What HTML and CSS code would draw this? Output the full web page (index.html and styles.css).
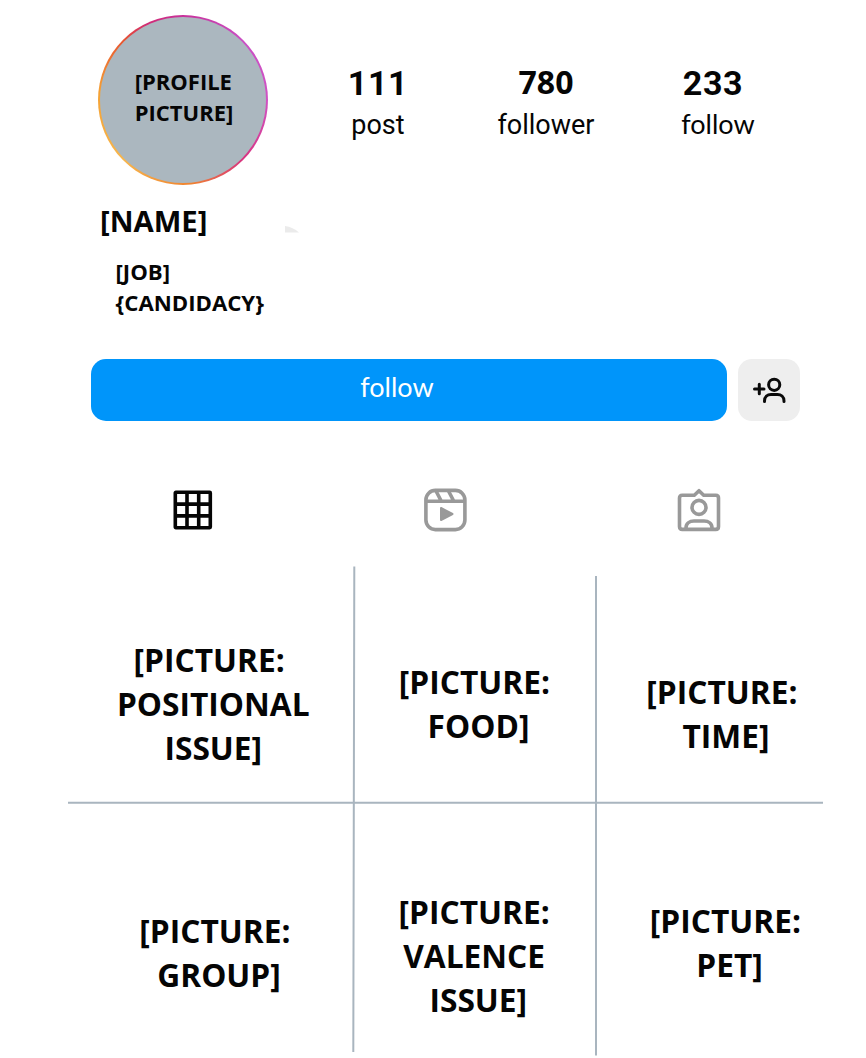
FILE: index.html
```html
<!DOCTYPE html>
<html lang="en">
<head>
<meta charset="utf-8">
<title>Profile</title>
<link rel="stylesheet" href="styles.css">
</head>
<body>
<main class="profile">
  <header class="header">
    <div class="avatar"><div class="avatar-fill">[PROFILE<br>PICTURE]</div></div>
    <div class="stats">
      <div class="stat stat-post"><span class="count">111</span><span class="label">post</span></div>
      <div class="stat stat-follower"><span class="count">780</span><span class="label">follower</span></div>
      <div class="stat stat-follow"><span class="count">233</span><span class="label">follow</span></div>
    </div>
  </header>
  <section class="bio">
    <div class="name-row">
      <h1 class="name">[NAME]</h1>
      <svg class="fleck" width="14" height="7" viewBox="0 0 14 7"><path d="M0 0Q8 1 14 6.500H0z" fill="#ebebeb"/></svg>
    </div>
    <p class="about">[JOB]<br>{CANDIDACY}</p>
  </section>
  <div class="actions">
    <button class="follow">follow</button>
    <button class="suggest" aria-label="Suggestions">
      <svg width="61" height="62" viewBox="0 0 61 62" fill="none" stroke="#0a0a0a" stroke-width="3" stroke-linecap="round">
        <path d="M16.500 30H26M21.300 25.200V34.800"/><circle cx="36.200" cy="25.800" r="5.600"/><path d="M26.500 42.500V42C26.500 37.500 29.500 35.400 33 35.400H39.500C43 35.400 46 37.500 46 42V42.500"/>
      </svg>
    </button>
  </div>
  <nav class="tabs">
    <svg width="40" height="40" viewBox="0 0 40 40" fill="none" stroke="#050505" stroke-width="3.600">
      <rect x="2.300" y="2.300" width="35" height="35.400" rx=".6"/><path d="M14 2V38M25.700 2V38M2 14.100H37M2 25.900H37"/>
    </svg>
    <svg width="44" height="44" viewBox="0 0 44 44" fill="none" stroke="#999" stroke-width="3.600" stroke-linejoin="round">
      <rect x="2.900" y="2.400" width="39" height="39.200" rx="9.500"/><path d="M3 13.200H42M13 3L18.200 13M25.500 3L30.700 13"/><path d="M18 20V32L29.500 26z" fill="#999" stroke-width="2"/>
    </svg>
    <svg width="44" height="44" viewBox="0 0 44 44" fill="none" stroke="#999" stroke-width="3.600" stroke-linejoin="round">
      <path d="M5.200 7.200H17.300L22 2.700L26.700 7.200H38.800Q41.500 7.200 41.500 10V38.500Q41.500 41.400 38.800 41.400H5.200Q2.500 41.400 2.500 38.500V10Q2.500 7.200 5.200 7.200z"/><circle cx="22" cy="19.400" r="7"/><path d="M9 41V40C9 35.500 12.500 33 17 33H27C31.500 33 35 35.500 35 40V41"/>
    </svg>
  </nav>
  <section class="gallery">
    <div class="tile tile-positional">[PICTURE: 
POSITIONAL
ISSUE]</div>
    <div class="tile tile-food">[PICTURE: 
FOOD]</div>
    <div class="tile tile-time">[PICTURE: 
TIME]</div>
    <div class="tile tile-group">[PICTURE: 
GROUP]</div>
    <div class="tile tile-valence">[PICTURE: 
VALENCE 
ISSUE]</div>
    <div class="tile tile-pet">[PICTURE: 
PET]</div>
    <svg class="dividers" width="756" height="492" viewBox="0 0 756 492" fill="none" stroke="#a9b5bf" stroke-width="2">
      <path d="M286.300 .5L285.300 486M528 10V489.500M0 236.700H755"/>
    </svg>
  </section>
</main>
</body>
</html>
```
FILE: styles.css
```css
* { box-sizing: border-box; }
body { margin: 0; background: #fff; color: #050505; font-family: "Open Sans", sans-serif; }
.profile { width: 866px; height: 1058px; overflow: hidden; padding: 15px 42px 0 68px; }
.header { display: flex; height: 170px; padding-left: 30.4px; }
.avatar {
  width: 170px; height: 170px; padding: 2px; border-radius: 50%;
  background: conic-gradient(#c8329b, #c94fc4 45deg, #d052c4 90deg, #d8337f 135deg, #f0832f 175deg, #f6b64e 225deg, #f5a235 275deg, #e8542f 315deg, #d12b75 335deg, #c8329b);
}
.avatar-fill {
  height: 100%; border-radius: 50%; background: #abb7bf; padding: 49px 0 0 34.3px;
  font-size: 22px; line-height: 30.5px; font-weight: 700;
}
.stats { display: grid; grid-template-columns: 168px 168px 176px; margin-left: 25.6px; }
.stat { display: flex; flex-direction: column; align-items: center; padding-top: 48px; }
.count { font: 700 34px/40px Roboto, sans-serif; letter-spacing: .6px; }
.label { font: 400 27px/32px Roboto, sans-serif; margin-top: 6px; }
.stat-follower .count { font: 700 32px/38px "Open Sans", sans-serif; letter-spacing: 0; margin-bottom: 2px; }
.stat-follow .count { margin-right: 10px; }
.stat-follow .label { font: 400 27px/32px Lato, sans-serif; margin-top: 5px; }
.bio { height: 174px; padding: 15px 0 0 32px; }
.name-row { display: flex; }
.name { margin: 0; width: 185px; font-size: 29.3px; line-height: 42px; font-weight: 700; }
.fleck { margin-top: 26px; }
.about { margin: 14px 0 0 15.5px; font-size: 22.2px; line-height: 31px; font-weight: 700; }
.actions { display: flex; gap: 11px; padding-left: 23px; height: 62px; }
.follow {
  width: 636px; border: 0; border-radius: 15px; padding: 0 24px 6px 0;
  background: #0095fa; color: #fff; font: 400 27px/32px Lato, sans-serif;
}
.suggest { width: 61.5px; height: 62px; padding: 0; border: 0; border-radius: 14px; background: #eee; }
.suggest svg { display: block; }
.tabs { display: flex; justify-content: space-between; align-items: center; height: 44px; margin-top: 67px; padding: 0 103.5px 0 104.5px; }
.gallery {
  position: relative; display: grid; width: 756px; height: 492px; margin-top: 34px;
  grid-template-columns: 285px 242px 229px; grid-template-rows: 236px 256px;
}
.tile { white-space: pre; text-align: center; font-size: 31.7px; line-height: 44.2px; font-weight: 700; }
.tile-positional { padding: 71.5px 0 0 5.500px; }
.tile-food { padding: 94px 0 0 9px; }
.tile-time { padding: 104px 0 0 33px; }
.tile-group { padding: 106.5px 0 0 17px; }
.tile-valence { padding: 88px 0 0 8.500px; }
.tile-pet { padding: 97px 0 0 40px; }
.dividers { position: absolute; inset: 0; }
```
